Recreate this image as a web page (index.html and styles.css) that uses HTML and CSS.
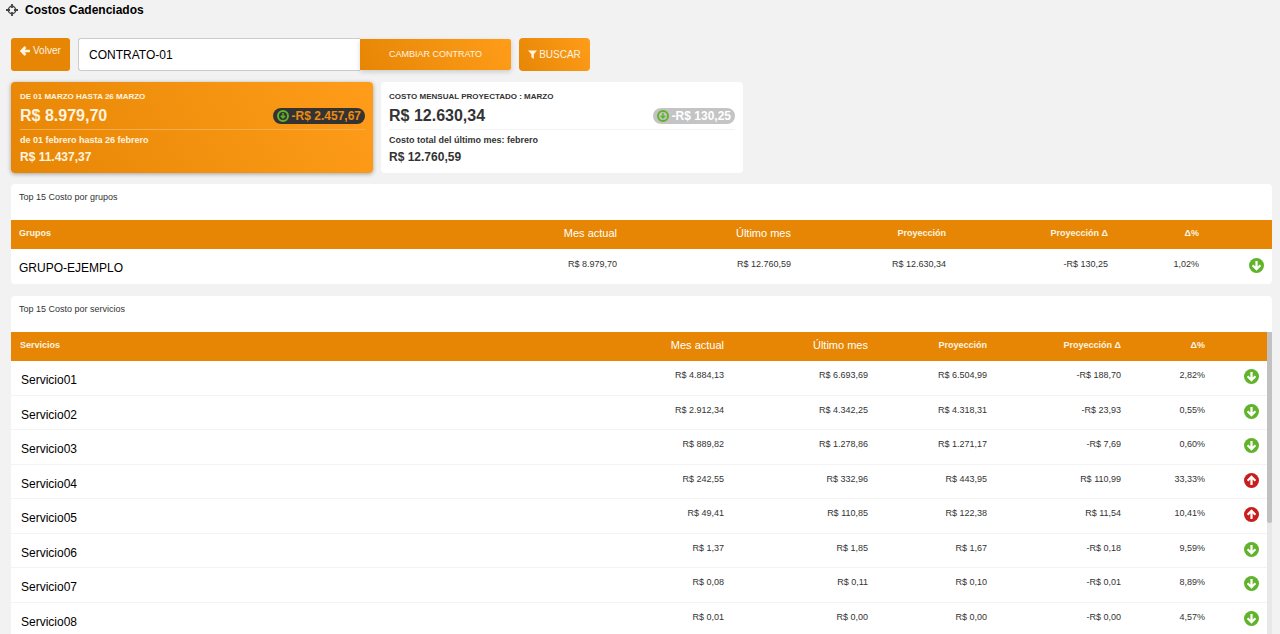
FILE: index.html
```html
<!DOCTYPE html>
<html lang="es">
<head>
<meta charset="utf-8">
<title>Costos Cadenciados</title>
<link rel="stylesheet" href="styles.css">
</head>
<body>
<svg class="sprite" aria-hidden="true">
  <symbol id="down" viewBox="0 0 16 16"><circle cx="8" cy="8" r="8" fill="currentColor"/><path class="arrow" d="M8 3.2v8.6M3.8 7.8 8 12l4.2-4.2"/></symbol>
  <symbol id="up" viewBox="0 0 16 16"><circle cx="8" cy="8" r="8" fill="currentColor"/><path class="arrow" d="M8 12.8V4.2M3.8 8.2 8 4l4.2 4.2"/></symbol>
  <symbol id="ring" viewBox="0 0 12 12"><circle cx="6" cy="6" r="5" fill="none" stroke="currentColor" stroke-width="2"/><path d="M6 3v5M3.8 5.8 6 8l2.2-2.2" fill="none" stroke="currentColor" stroke-width="1.5"/></symbol>
</svg>
<header class="page-head">
  <svg class="crosshair" viewBox="0 0 12 12" aria-hidden="true"><circle cx="6" cy="6" r="3.7" fill="none" stroke="#444" stroke-width="1.4"/><path d="M6 0v4M6 8v4M0 6h4M8 6h4" stroke="#444" stroke-width="1.8"/></svg>
  <h1 class="page-title">Costos Cadenciados</h1>
</header>
<main class="content">
  <form class="toolbar">
    <button type="button" class="btn btn-back"><svg class="icon-back" viewBox="0 0 10 10" aria-hidden="true"><path d="M5.5 1 1.5 5l4 4M2 5h8" fill="none" stroke="currentColor" stroke-width="2.6"/></svg>Volver</button>
    <div class="contract">
      <input class="contract-input" type="text" value="CONTRATO-01" aria-label="Contrato">
      <button type="button" class="btn btn-change">CAMBIAR CONTRATO</button>
    </div>
    <button type="button" class="btn btn-search"><svg class="icon-filter" viewBox="0 0 9 9" aria-hidden="true"><path d="M0 .5h9L5.8 4.3V9L3.4 7.2V4.3z" fill="currentColor"/></svg>BUSCAR</button>
  </form>

  <section class="cards">
    <article class="card card-current">
      <h2 class="card-label">DE 01 MARZO HASTA 26 MARZO</h2>
      <div class="card-main"><strong class="amount">R$ 8.979,70</strong><span class="pill"><svg class="pill-icon" aria-hidden="true"><use href="#ring"/></svg>-R$ 2.457,67</span></div>
      <p class="card-sub">de 01 febrero hasta 26 febrero</p>
      <p class="card-prev">R$ 11.437,37</p>
    </article>
    <article class="card">
      <h2 class="card-label">COSTO MENSUAL PROYECTADO : MARZO</h2>
      <div class="card-main"><strong class="amount">R$ 12.630,34</strong><span class="pill"><svg class="pill-icon" aria-hidden="true"><use href="#ring"/></svg>-R$ 130,25</span></div>
      <p class="card-sub">Costo total del último mes: febrero</p>
      <p class="card-prev">R$ 12.760,59</p>
    </article>
  </section>

  <section class="panel">
    <h2 class="panel-title">Top 15 Costo por grupos</h2>
    <table class="costs groups">
      <colgroup><col><col class="c-now"><col class="c-last"><col class="c-proj"><col class="c-delta"><col class="c-pct"><col class="c-icon"></colgroup>
      <thead><tr><th>Grupos</th><th class="light">Mes actual</th><th class="light">Último mes</th><th>Proyección</th><th>Proyección Δ</th><th>Δ%</th><th></th></tr></thead>
      <tbody>
        <tr><td>GRUPO-EJEMPLO</td><td>R$ 8.979,70</td><td>R$ 12.760,59</td><td>R$ 12.630,34</td><td>-R$ 130,25</td><td>1,02%</td><td><svg class="trend down" role="img" aria-label="Baja"><use href="#down"/></svg></td></tr>
      </tbody>
    </table>
  </section>

  <section class="panel">
    <h2 class="panel-title">Top 15 Costo por servicios</h2>
    <div class="scroller">
      <table class="costs services">
        <colgroup><col><col class="c-now"><col class="c-last"><col class="c-proj"><col class="c-delta"><col class="c-pct"><col class="c-icon"></colgroup>
        <thead><tr><th>Servicios</th><th class="light">Mes actual</th><th class="light">Último mes</th><th>Proyección</th><th>Proyección Δ</th><th>Δ%</th><th></th></tr></thead>
        <tbody>
          <tr><td>Servicio01</td><td>R$ 4.884,13</td><td>R$ 6.693,69</td><td>R$ 6.504,99</td><td>-R$ 188,70</td><td>2,82%</td><td><svg class="trend down" role="img" aria-label="Baja"><use href="#down"/></svg></td></tr>
          <tr><td>Servicio02</td><td>R$ 2.912,34</td><td>R$ 4.342,25</td><td>R$ 4.318,31</td><td>-R$ 23,93</td><td>0,55%</td><td><svg class="trend down" role="img" aria-label="Baja"><use href="#down"/></svg></td></tr>
          <tr><td>Servicio03</td><td>R$ 889,82</td><td>R$ 1.278,86</td><td>R$ 1.271,17</td><td>-R$ 7,69</td><td>0,60%</td><td><svg class="trend down" role="img" aria-label="Baja"><use href="#down"/></svg></td></tr>
          <tr><td>Servicio04</td><td>R$ 242,55</td><td>R$ 332,96</td><td>R$ 443,95</td><td>R$ 110,99</td><td>33,33%</td><td><svg class="trend up" role="img" aria-label="Sube"><use href="#up"/></svg></td></tr>
          <tr><td>Servicio05</td><td>R$ 49,41</td><td>R$ 110,85</td><td>R$ 122,38</td><td>R$ 11,54</td><td>10,41%</td><td><svg class="trend up" role="img" aria-label="Sube"><use href="#up"/></svg></td></tr>
          <tr><td>Servicio06</td><td>R$ 1,37</td><td>R$ 1,85</td><td>R$ 1,67</td><td>-R$ 0,18</td><td>9,59%</td><td><svg class="trend down" role="img" aria-label="Baja"><use href="#down"/></svg></td></tr>
          <tr><td>Servicio07</td><td>R$ 0,08</td><td>R$ 0,11</td><td>R$ 0,10</td><td>-R$ 0,01</td><td>8,89%</td><td><svg class="trend down" role="img" aria-label="Baja"><use href="#down"/></svg></td></tr>
          <tr><td>Servicio08</td><td>R$ 0,01</td><td>R$ 0,00</td><td>R$ 0,00</td><td>-R$ 0,00</td><td>4,57%</td><td><svg class="trend down" role="img" aria-label="Baja"><use href="#down"/></svg></td></tr>
        </tbody>
      </table>
      <div class="track"><div class="thumb"></div></div>
    </div>
  </section>
</main>
</body>
</html>
```
FILE: styles.css
```css
* { box-sizing: border-box; }
body {
  margin: 0;
  height: 100vh;
  overflow: hidden;
  background: #f2f2f2;
  color: #333;
  font-family: "Liberation Sans", Arial, sans-serif;
  font-size: 9px;
}
h1, h2, p { margin: 0; }
.sprite { display: none; }
.arrow { fill: none; stroke: #fff; stroke-width: 2.4; }

.page-head { display: flex; align-items: center; gap: 7px; height: 19px; padding-left: 6px; }
.crosshair { width: 12px; height: 12px; }
.page-title { color: #000; font-size: 12px; line-height: 14px; }

.content { display: flex; flex-direction: column; padding: 19px 8px 0 11px; }

.toolbar { display: flex; gap: 8px; }
.btn {
  border: 0;
  color: #fff4e0;
  font-family: inherit;
  background: linear-gradient(60deg, #e68604, #ff9d1a);
}
.btn-back {
  display: flex;
  gap: 3px;
  width: 59px;
  height: 33px;
  padding: 7px 9px;
  border-radius: 3px;
  background: #e68604;
  font-size: 10px;
  line-height: 12px;
}
.icon-back { flex: none; width: 10px; height: 10px; margin-top: 1px; }
.contract { display: flex; align-items: center; }
.contract-input {
  width: 282px;
  height: 33px;
  padding: 0 10px;
  border: 1px solid #ccc;
  border-right: 0;
  border-radius: 3px 0 0 3px;
  background: #fff;
  color: #000;
  font-family: inherit;
  font-size: 12px;
}
.btn-change {
  width: 151px;
  height: 31px;
  padding: 0 0 2px;
  border-radius: 0 2px 2px 0;
  font-size: 9px;
  box-shadow: 0 2px 5px rgba(0, 0, 0, .16);
}
.btn-search {
  display: flex;
  align-items: center;
  justify-content: center;
  gap: 2px;
  width: 71px;
  height: 33px;
  padding: 0;
  border-radius: 4px;
  font-size: 10px;
}
.icon-filter { width: 9px; height: 9px; }

.cards { display: flex; gap: 8px; margin-top: 11px; }
.card {
  width: 362px;
  height: 91px;
  padding: 10px 8px;
  border-radius: 4px;
  background: #fff;
  font-weight: bold;
}
.card-current {
  padding-left: 9px;
  background: linear-gradient(60deg, #e68604, #ff9d1a);
  color: #fff4e0;
  box-shadow: 0 1px 4px rgba(0, 0, 0, .35);
}
.card-label { font-size: 8px; line-height: 10px; }
.card-main {
  display: flex;
  align-items: center;
  justify-content: space-between;
  height: 28px;
  border-bottom: 1px solid #f2f2f2;
}
.card-current .card-main { border-color: #f6ac4a; }
.amount { font-size: 16px; line-height: 18px; }
.pill {
  display: flex;
  align-items: center;
  gap: 3px;
  height: 16px;
  padding: 0 4px;
  border-radius: 8px;
  background: #c4c4c4;
  color: #fff;
  font-size: 12px;
}
.card-current .pill { background: #333; color: #ed8b10; }
.pill .pill-icon { width: 12px; height: 12px; color: #60b32a; }
.card-sub { margin-top: 4px; font-size: 9px; line-height: 12px; }
.card-prev { margin-top: 4px; font-size: 12px; line-height: 14px; }

.panel { margin-top: 11px; border-radius: 4px; background: #fff; overflow: hidden; }
.panel + .panel { margin-top: 12px; }
.panel-title { height: 36px; padding: 7px 8px; font-size: 9px; font-weight: normal; line-height: 12px; }

.costs { width: 100%; table-layout: fixed; border-collapse: separate; border-spacing: 0; }
.costs th {
  height: 29px;
  padding: 0 8px 3px;
  background: #e68604;
  color: #fff4e0;
  font-size: 9px;
  text-align: right;
}
.costs .light { color: #fff; font-size: 11px; font-weight: normal; }
.costs td { padding: 9px 8px 0; line-height: 12px; text-align: right; vertical-align: top; }
.costs th:first-child { text-align: left; }
.costs td:first-child { padding-top: 12px; color: #000; font-size: 12px; line-height: 14px; text-align: left; }
.costs tbody tr { height: 35px; }
.costs tbody tr:nth-child(even) { height: 34px; }
.trend { display: block; width: 15px; height: 15px; margin-left: auto; }
.down { color: #60b32a; }
.up { color: #c81e1e; }

.groups .c-now { width: 174px; }
.groups .c-last { width: 174px; }
.groups .c-proj { width: 155px; }
.groups .c-delta { width: 162px; }
.groups .c-pct { width: 91px; }
.groups .c-icon { width: 65px; }

.services { flex: 1; }
.services th:first-child { padding-left: 9px; }
.services td:first-child { padding-left: 10px; }
.services .c-now { width: 144px; }
.services .c-last { width: 144px; }
.services .c-proj { width: 119px; }
.services .c-delta { width: 134px; }
.services .c-pct { width: 84px; }
.services .c-icon { width: 54px; }
.services td { padding-top: 8px; border-bottom: 1px solid #f3f3f3; }

.scroller { display: flex; }
.track { width: 5px; background: #e8e8e8; }
.thumb { height: 191px; border-radius: 0 0 2px 2px; background: #c1c1c1; }
```
